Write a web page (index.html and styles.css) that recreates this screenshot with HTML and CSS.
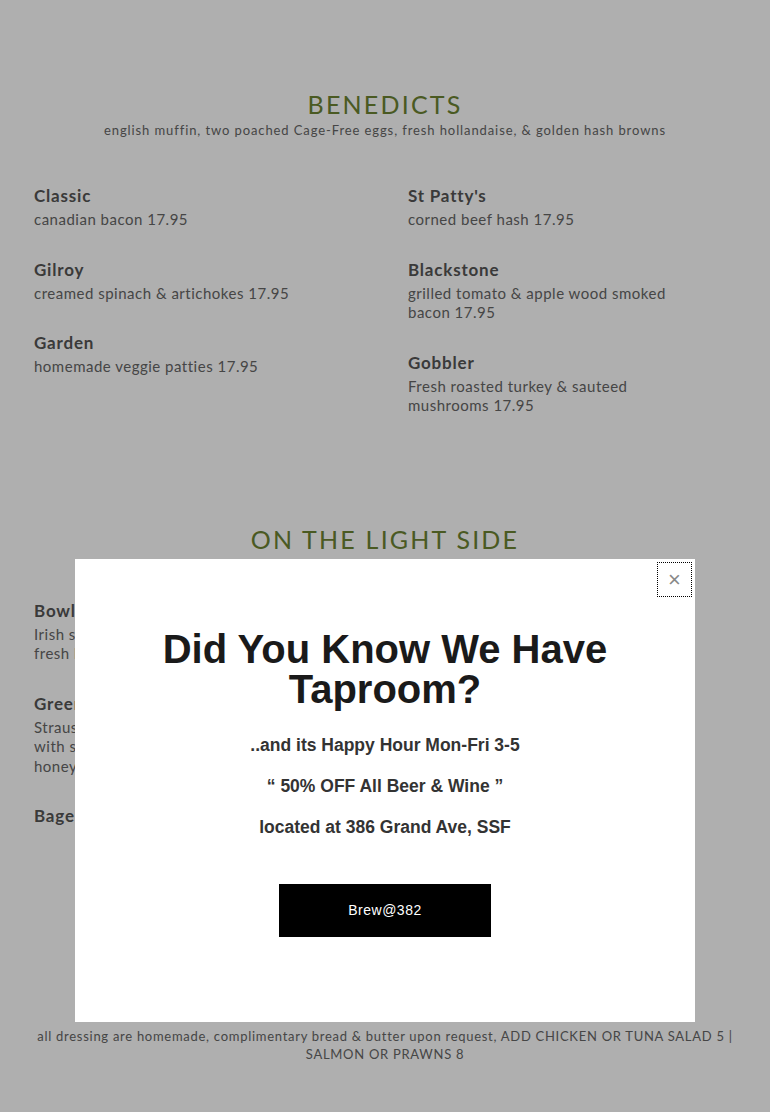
FILE: index.html
```html
<!DOCTYPE html>
<html lang="en">
<head>
  <meta charset="UTF-8">
  <meta name="viewport" content="width=device-width, initial-scale=1.0">
  <title>Menu</title>
  <link rel="stylesheet" href="styles.css">
</head>
<body>
  <div class="menu">
    <section class="menu-section benedicts">
      <h2 class="section-title">BENEDICTS</h2>
      <p class="section-note">english muffin, two poached Cage-Free eggs, fresh hollandaise, &amp; golden hash browns</p>
      <div class="menu-grid">
        <div class="menu-col">
          <div class="item">
            <h3>Classic</h3>
            <p>canadian bacon 17.95</p>
          </div>
          <div class="item">
            <h3>Gilroy</h3>
            <p>creamed spinach &amp; artichokes 17.95</p>
          </div>
          <div class="item">
            <h3>Garden</h3>
            <p>homemade veggie patties 17.95</p>
          </div>
        </div>
        <div class="menu-col">
          <div class="item">
            <h3>St Patty's</h3>
            <p>corned beef hash 17.95</p>
          </div>
          <div class="item">
            <h3>Blackstone</h3>
            <p>grilled tomato &amp; apple wood smoked bacon 17.95</p>
          </div>
          <div class="item">
            <h3>Gobbler</h3>
            <p>Fresh roasted turkey &amp; sauteed mushrooms 17.95</p>
          </div>
        </div>
      </div>
    </section>

    <section class="menu-section light">
      <h2 class="section-title">ON THE LIGHT SIDE</h2>
      <div class="menu-grid">
        <div class="menu-col">
          <div class="item">
            <h3>Bowl of Soup</h3>
            <p>Irish stew or soup of the day, served with fresh bread 9.95</p>
          </div>
          <div class="item">
            <h3>Green Salad</h3>
            <p>Straus organic greens &amp; tomatoes<br>with sliced almonds, cranberries &amp;<br>honey vinaigrette 12.95</p>
          </div>
          <div class="item">
            <h3>Bagel</h3>
          </div>
        </div>
        <div class="menu-col"></div>
      </div>
      <p class="footnote">all dressing are homemade, complimentary bread &amp; butter upon request, ADD CHICKEN OR TUNA SALAD 5 | SALMON OR PRAWNS 8</p>
    </section>
  </div>

  <div class="overlay"></div>
  <div class="popup">
    <button class="popup-close" type="button" aria-label="Close">&times;</button>
    <h1>Did You Know We Have Taproom?</h1>
    <p>..and its Happy Hour Mon-Fri 3-5</p>
    <p>&ldquo; 50% OFF All Beer &amp; Wine &rdquo;</p>
    <p>located at 386 Grand Ave, SSF</p>
    <a class="popup-btn" href="#">Brew@382</a>
  </div>
</body>
</html>
```

FILE: styles.css
```css
* {
  margin: 0;
  padding: 0;
  box-sizing: border-box;
}
body {
  font-family: 'Lato', 'Open Sans', sans-serif;
  background: #fff;
  color: #5a5a5a;
}
.menu {
  padding: 88px 34px 0;
}
.section-title {
  font-weight: 400;
  font-size: 25px;
  line-height: 32px;
  letter-spacing: 2.2px;
  text-align: center;
  color: #6d8332;
}
.section-note {
  font-size: 13px;
  line-height: 20px;
  letter-spacing: 0.9px;
  text-align: center;
  color: #666;
}
.menu-grid {
  display: grid;
  grid-template-columns: 374px 300px;
  margin-top: 44px;
}
.menu-col {
  max-width: 300px;
}
.item {
  margin-bottom: 28px;
}
.item h3 {
  font-size: 17px;
  font-weight: 700;
  line-height: 24px;
  letter-spacing: 0.8px;
  color: #555;
  margin-bottom: 2px;
}
.item p {
  font-size: 15px;
  line-height: 19.5px;
  letter-spacing: 0.5px;
  color: #666;
}
.light {
  margin-top: 79px;
}
.light .menu-grid {
  margin-top: 44px;
}
.footnote {
  margin-top: 171px;
  font-size: 13px;
  line-height: 18px;
  letter-spacing: 0.72px;
  text-align: center;
  color: #666;
}
.overlay {
  position: fixed;
  inset: 0;
  background: rgba(0, 0, 0, 0.314);
}
.popup {
  position: fixed;
  top: 559px;
  left: 50%;
  transform: translateX(-50%);
  width: 620px;
  height: 463px;
  background: #fff;
  padding: 70px 40px 0;
  text-align: center;
  font-family: 'Liberation Sans', Arial, sans-serif;
}
.popup h1 {
  font-size: 40px;
  line-height: 40px;
  font-weight: 700;
  color: #1a1a1a;
  margin-bottom: 24px;
}
.popup p {
  font-size: 17.5px;
  line-height: 24px;
  font-weight: 700;
  color: #333;
  margin-bottom: 17px;
}
.popup-btn {
  display: inline-block;
  margin-top: 28px;
  width: 212px;
  height: 53px;
  line-height: 53px;
  background: #000;
  color: #fff;
  font-size: 14px;
  letter-spacing: 0.5px;
  text-decoration: none;
}
.popup-close {
  position: absolute;
  top: 3px;
  right: 3px;
  width: 35px;
  height: 35px;
  border: 1px dotted #000;
  background: transparent;
  color: #888;
  font-family: 'Liberation Sans', Arial, sans-serif;
  font-size: 22px;
  line-height: 31px;
  cursor: pointer;
}
```
